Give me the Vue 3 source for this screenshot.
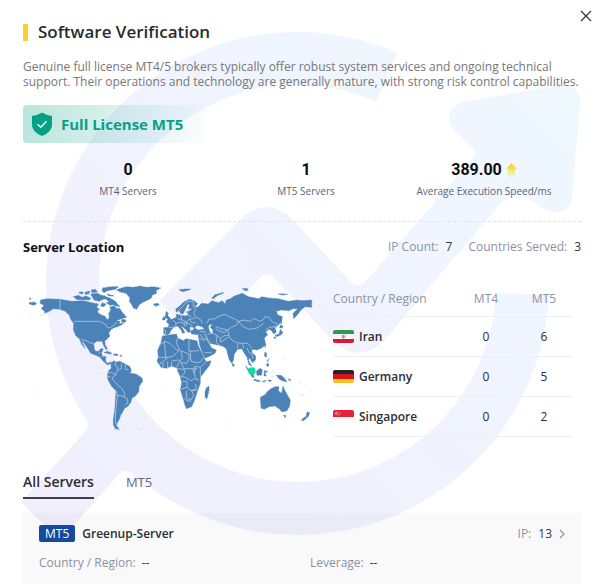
<script setup>
import { ref } from 'vue'

const stats = [
  { value: '0', label: 'MT4 Servers' },
  { value: '1', label: 'MT5 Servers' },
  { value: '389.00', label: 'Average Execution Speed/ms', up: true },
]

const countries = [
  { name: 'Iran', flag: 'ir', mt4: 0, mt5: 6 },
  { name: 'Germany', flag: 'de', mt4: 0, mt5: 5 },
  { name: 'Singapore', flag: 'sg', mt4: 0, mt5: 2 },
]

const tabs = ['All Servers', 'MT5']
const active = ref('All Servers')
</script>

<template>
  <main class="panel">
    <svg class="watermark" viewBox="0 0 600 586" aria-hidden="true">
      <defs>
        <linearGradient id="wm" gradientUnits="userSpaceOnUse" x1="90" y1="520" x2="560" y2="90">
          <stop offset="0" stop-color="#f1effd" />
          <stop offset="0.5" stop-color="#f0f3fe" />
          <stop offset="1" stop-color="#eff8fe" />
        </linearGradient>
      </defs>
      <path d="M386.7 76.9A225 225 0 1 0 522.3 294" fill="none" stroke="url(#wm)" stroke-width="53" />
      <path fill="url(#wm)" d="M21 502L85 432Q90 426 86 418L140 470L146 489L131 473Q125 468 119 474L60 541Z" />
      <path fill="url(#wm)" d="M159 301L243 217Q267 197 290 217L350 281Q358 290 367 280L474 157Q477 153 473 148L455 132Q442 115 457 104Q460 102 468 101L560 85Q580 83 580 103L572 197Q569 214 552 212Q545 211 540 206L523 195Q516 191 511 195L500 204L383 342Q358 364 334 342L273 277Q267 271 261 277L198 340Z" />
    </svg>

    <button class="close" type="button" aria-label="Close">
      <svg viewBox="0 0 12 12" width="12" height="12"><path d="M1 1L11 11M11 1L1 11" fill="none" stroke="#333" stroke-width="1.2" /></svg>
    </button>

    <h1 class="title">Software Verification</h1>
    <p class="desc">Genuine full license MT4/5 brokers typically offer robust system services and ongoing technical support. Their operations and technology are generally mature, with strong risk control capabilities.</p>

    <div class="license">
      <svg viewBox="0 0 22 24" width="22" height="24" aria-hidden="true">
        <path d="M11 0.5Q15 3 21 4V13Q21 20 11 24Q1 20 1 13V4Q7 3 11 0.5Z" fill="#06a184" />
        <path d="M6.5 12.2L9.8 15.3L15.5 9.2" fill="none" stroke="#e6fff8" stroke-width="1.5" />
      </svg>
      <span>Full License MT5</span>
    </div>

    <dl class="stats">
      <div v-for="s in stats" :key="s.label" class="stat">
        <dd>
          {{ s.value }}
          <svg v-if="s.up" viewBox="0 0 11 14" width="11" height="14" aria-hidden="true">
            <defs>
              <linearGradient id="up" x1="0" y1="0" x2="0" y2="1">
                <stop offset="0.3" stop-color="#efdc45" />
                <stop offset="1" stop-color="#f3e34d" stop-opacity="0.15" />
              </linearGradient>
            </defs>
            <path d="M5.5 0L11 6H9V14H2V6H0Z" fill="url(#up)" />
          </svg>
        </dd>
        <dt>{{ s.label }}</dt>
      </div>
    </dl>

    <section class="location">
      <header class="location-head">
        <h2>Server Location</h2>
        <p><span>IP Count:</span><b>7</b></p>
        <p><span>Countries Served:</span><b>3</b></p>
      </header>

      <div class="location-body">
        <svg class="map" viewBox="9 24 882 450" role="img" aria-label="World map">
          <g class="land">
            <path d="M62 78L80 74L120 76L155 82L190 80L215 86L235 90L230 100L238 106L232 112L238 120L255 127L262 137L268 130L266 118L272 108L270 98L282 96L292 104L298 102L308 116L320 130L300 136L288 141L300 142L298 150L312 146L306 152L292 158L280 162L272 168L266 178L270 186L262 194L254 202L256 214L262 224L258 227L250 212L246 202L230 202L222 208L222 220L226 232L236 232L242 224L250 224L244 238L248 246L258 248L256 262L264 268L272 263L272 270L262 272L250 262L240 250L228 244L212 238L204 224L192 208L183 197L190 212L195 224L186 212L178 194L168 186L160 168L161 148L152 136L148 124L136 112L120 106L100 104L88 112L74 118L74 112L64 104L72 94L60 88Z" />
            <path d="M290 48L304 42L320 38L340 40L360 36L380 40L400 38L422 42L408 50L410 58L396 64L394 72L384 78L370 84L358 92L350 106L340 102L334 90L328 82L330 72L318 58L300 54Z" />
            <path d="M272 268L282 260L288 264L300 262L316 270L330 278L334 290L330 298L348 300L366 312L368 322L358 336L356 354L346 366L336 372L332 386L322 398L314 402L308 414L302 424L298 436L292 446L290 456L298 466L286 464L280 452L280 436L284 410L286 380L288 350L276 338L264 318L262 302L266 290L274 282Z" />
            <path d="M160 68L176 64L186 70L198 66L212 72L208 78L190 77L172 77ZM212 60L232 58L244 64L256 66L262 74L250 76L238 82L222 78ZM248 42L272 38L296 38L286 46L262 50L252 56L246 50ZM214 48L226 46L232 54L216 56ZM250 68L264 70L276 76L286 82L294 92L300 98L288 96L278 92L270 94L258 86L268 84L258 76ZM196 54L210 52L208 58L196 62ZM178 54L190 54L188 60L178 58ZM262 60L282 66L266 66ZM246 86L258 90L252 98L242 96ZM400 90L414 88L418 93L406 97ZM28 72L34 74L30 77ZM28 86L44 84L50 90L40 94L28 90ZM306 136L318 138L316 145L304 144Z" />
            <path d="M252 236L262 232L276 238L270 240L258 237ZM280 240L292 240L294 245L282 244ZM300 244L305 244L305 247L300 247Z" />
            <g transform="translate(435 0)">
              <path fill-rule="evenodd" d="M32 106L44 96L56 84L74 76L90 82L98 90L88 98L98 100L110 88L130 90L140 80L160 86L172 80L180 90L184 78L196 74L208 66L232 58L250 68L282 74L290 68L312 72L340 74L370 82L398 78L410 80L440 78L440 100L420 98L408 108L396 124L386 134L384 118L398 104L384 104L372 110L350 108L334 112L338 122L352 128L350 140L340 154L330 162L334 174L326 180L320 170L312 166L302 174L308 182L298 192L302 212L290 222L276 228L262 226L260 234L272 246L272 258L262 266L254 252L250 258L260 277L252 272L246 250L238 238L230 224L218 226L208 240L205 260L200 268L192 256L187 236L184 224L172 216L154 212L134 208L122 190L116 180L104 182L80 180L76 172L88 166L82 158L74 160L76 172L70 176L60 164L52 158L46 154L56 168L60 176L52 178L50 170L38 156L30 158L20 166L12 180L2 184L-4 178L-4 161L10 160L12 150L4 144L20 136L34 130L34 120L46 124L62 126L72 120L64 114L74 110L82 104L70 104L74 92L68 90L60 108L54 120L46 118L44 110L34 114ZM88 162L96 154L112 158L118 166L100 168ZM132 152L142 150L136 160L144 168L142 180L134 174L130 160Z" />
              <path d="M-8 186L10 183L34 180L38 192L56 200L62 194L84 198L96 200L100 216L110 236L118 254L124 263L138 260L134 274L118 294L106 310L106 328L100 344L94 362L88 380L80 398L64 404L60 394L54 372L46 348L50 326L46 308L38 292L36 282L20 276L4 283L-12 280L-24 262L-20 248L-22 228L-12 206Z" />
              <path d="M100 183L116 180L124 196L134 212L140 222L154 228L150 238L136 246L120 253L112 236L104 214Z" />
              <path d="M124 342L132 336L132 350L126 374L120 370L120 354ZM4 112L10 118L8 124L18 136L20 142L4 144L8 136L0 128ZM-6 130L2 128L0 138L-8 138Z" />
              <path d="M286 370L300 362L308 352L318 344L330 338L342 338L340 350L350 358L354 336L360 350L370 368L376 378L374 396L366 410L352 414L342 404L330 396L312 398L298 406L288 402ZM356 424L364 425L360 431ZM426 414L434 416L430 428L422 432ZM420 428L424 434L412 441L409 438Z" />
              <path d="M242 276L252 286L262 298L268 310L262 310L250 292ZM268 316L286 320L282 323L266 319ZM274 292L286 282L292 288L290 304L276 304ZM298 290L308 292L300 298L304 306L297 306ZM334 304L348 304L358 312L366 324L352 320L344 316L338 310ZM300 234L305 238L304 250L298 246ZM306 268L312 270L310 278L304 274ZM312 254L306 262L308 264ZM202 268L208 272L206 278L202 275ZM346 166L354 176L346 184L334 188L330 184L342 180ZM326 190L332 188L330 195ZM346 154L354 156L352 162L344 162ZM348 130L350 130L350 150L347 150ZM300 212L303 214L300 221ZM292 322L304 319L300 323ZM310 318L320 319L314 324Z" />
              <path d="M42 47L60 45L78 45L70 49L52 53ZM140 72L150 62L176 55L174 58L156 65L146 74ZM232 44L246 43L250 50L238 49ZM340 60L352 59L368 61L352 63ZM370 314L378 318L372 320Z" />
            </g>
          </g>
          <g class="specks">
            <path d="M60 126L84 116M34 127L36 128M80 230L86 236M50 340L52 342M48 354L50 356M236 298L240 298M434 345L438 347M308 458L314 459M360 466L368 466M284 466L298 468" />
            <path transform="translate(435 0)" d="M400 320L412 332M404 360L418 364M434 346L438 352M178 450L182 452M354 250L360 252M322 290L330 296M320 308L334 304M286 324L300 326" />
          </g>
          <g class="borders">
            <path d="M120 76V106M162 142H238L250 148L258 152L262 162L272 160L284 152L290 144M184 196L204 202L212 208L218 206L222 214M236 240L240 234M244 248L252 246M288 262L286 274L294 280L292 294L286 296L288 304M304 266L304 284L296 288M316 270V286L326 288M264 298L274 294L286 304L276 312L284 324L294 334L306 344L314 358L312 368L322 374L324 386L314 394M288 350L292 366L302 364L312 370M292 366L288 400L286 440L290 456M262 306L272 310" />
            <g transform="translate(435 0)">
              <path d="M-16 212L2 202L16 210L38 230M-2 200L2 250H-22M38 192L34 206L42 224M72 198V232L102 230M42 224L38 234L22 248L2 250M42 228L72 240V256L64 268L48 266L40 258L22 260M76 232L78 262L96 266L106 264L114 250M20 276V262M34 280L44 262L52 252L48 232M48 266L56 284H84L92 276L106 280L124 262M-6 280V262L8 252M8 282V262M36 284L58 286L60 296L48 308L62 310L78 320L88 314L102 318M92 278L88 298L92 314M106 280L106 308M84 286L86 298M52 322H66L66 340L48 346M66 340L78 350L94 344L92 330M64 350V372L78 378L86 364L80 350M58 374L66 380L80 382M78 350L96 348M96 284L84 286M-10 262L-16 272" />
              <path d="M34 120L42 108L56 94L64 84L76 82L86 84M86 84L84 96L92 106L86 118L92 128L108 138L112 148M48 126L50 138L64 144L72 136L90 132M24 138L34 148L28 158M34 148L46 144L56 148L66 146L82 156M50 138L38 134M64 144V156M-4 166L2 170V184M12 160L28 160M126 148L132 136L150 134L166 124L184 122L196 130L208 134L220 142L240 138L254 142L268 134L284 142L294 138L300 128L312 130L322 144L334 148L338 158L326 160M220 142L216 152L200 160L188 168M220 142L232 156L252 166L276 162L288 154L296 148M152 158L168 164L188 168L178 176L164 172L152 164M128 180L142 178L156 184L166 192L180 184L192 184M120 178L128 196L136 206M156 184L154 206L166 216M166 192V204L180 196L190 190M188 168L192 184L196 194L214 206L232 208L236 222M232 208L248 208L262 222M218 210V224M246 222L252 236L262 240L264 254M106 182L112 192L128 198M104 172L124 174M118 236L140 236M302 168L314 160L330 158M104 194L118 200M56 148L60 158M66 122L78 128M74 136L80 146L92 146" />
            </g>
          </g>
          <circle cx="696" cy="291" r="11" fill="#08df9d" />
        </svg>

        <table class="countries">
          <thead>
            <tr><th scope="col">Country / Region</th><th scope="col" class="num">MT4</th><th scope="col" class="num">MT5</th></tr>
          </thead>
          <tbody>
            <tr v-for="c in countries" :key="c.name">
              <th scope="row">
                <span class="country">
                  <svg class="flag" viewBox="0 0 21 13" width="21" height="13" aria-hidden="true">
                    <template v-if="c.flag === 'ir'">
                      <rect width="21" height="13" fill="#f7f7f7" />
                      <rect width="21" height="4" fill="#2c9a52" />
                      <rect y="9" width="21" height="4" fill="#d01c38" />
                      <path d="M9 5.2Q8.4 7.6 10.5 8.2Q12.6 7.6 12 5.2M10.5 4.8V8.2" fill="none" stroke="#dc6574" stroke-width="0.9" />
                    </template>
                    <template v-else-if="c.flag === 'de'">
                      <rect width="21" height="5" fill="#252322" />
                      <rect y="4" width="21" height="5" fill="#d8121f" />
                      <rect y="9" width="21" height="4" fill="#f6c51d" />
                    </template>
                    <template v-else>
                      <rect width="21" height="13" fill="#fcfcfc" />
                      <rect width="21" height="7" fill="#e6213a" />
                      <path d="M4 1.5Q0.5 3.5 4 5.5Q2.5 3.5 4 1.5Z" fill="#fff" />
                      <circle cx="5.8" cy="3.5" r="1.5" fill="none" stroke="#fff" stroke-width="0.7" stroke-dasharray="0.8 0.9" />
                    </template>
                  </svg>
                  {{ c.name }}
                </span>
              </th>
              <td class="num">{{ c.mt4 }}</td>
              <td class="num">{{ c.mt5 }}</td>
            </tr>
          </tbody>
        </table>
      </div>
    </section>

    <nav class="tabs" role="tablist">
      <button v-for="t in tabs" :key="t" type="button" role="tab" class="tab" :class="{ on: active === t }" :aria-selected="active === t" @click="active = t">{{ t }}</button>
    </nav>

    <article class="server">
      <div class="server-head">
        <span class="tag">MT5</span>
        <h3>Greenup-Server</h3>
        <a class="ip" href="#ip"><span>IP:</span><b>13</b>
          <svg viewBox="0 0 6 10" width="6" height="10" aria-hidden="true"><path d="M1 1L5 5L1 9" fill="none" stroke="#8d95a3" stroke-width="1.2" /></svg>
        </a>
      </div>
      <div class="server-meta">
        <p><span>Country / Region:</span><b>--</b></p>
        <p><span>Leverage:</span><b>--</b></p>
      </div>
    </article>
  </main>
</template>

<style>
body { background: #fff; }
</style>

<style scoped>
* { box-sizing: border-box; margin: 0; padding: 0; }
.panel {
  position: relative;
  isolation: isolate;
  padding: 20px 19px 4px 23px;
  font-family: "Open Sans", "Noto Sans", sans-serif;
  font-size: 12px;
  color: #2b2d33;
}
.watermark { position: absolute; inset: 0 0 auto 0; width: 100%; z-index: -1; }
button { border: 0; background: none; font: inherit; cursor: pointer; }
.close { position: absolute; top: 10px; right: 8px; width: 12px; height: 12px; }
.close svg { display: block; }

.title {
  display: flex;
  align-items: center;
  gap: 10px;
  font-size: 17px;
  font-weight: 600;
  line-height: 24px;
  color: #292b2f;
}
.title::before { content: ""; width: 5px; height: 17px; background: #fdd12c; }
.desc { margin-top: 15px; line-height: 15px; color: #777; }

.license {
  display: flex;
  align-items: center;
  gap: 8px;
  width: 181px;
  height: 38px;
  margin-top: 16px;
  padding-left: 8px;
  border-radius: 4px;
  background: linear-gradient(90deg, rgba(6, 161, 132, 0.28), rgba(6, 161, 132, 0.02));
  color: #06a184;
  font-size: 15px;
  font-weight: 700;
  white-space: nowrap;
}

.stats {
  display: grid;
  grid-template-columns: repeat(3, 1fr);
  padding: 16px 8px 23px 16px;
  border-bottom: 1px dashed #dfe2e8;
  text-align: center;
}
.stat { display: flex; flex-direction: column; }
.stat dd {
  display: flex;
  align-items: center;
  justify-content: center;
  gap: 4px;
  font: 700 16px/22px Roboto, sans-serif;
  color: #0c0e12;
}
.stat dt { margin-top: 3px; font-size: 10px; line-height: 14px; color: #596379; }

.location-head { display: flex; align-items: center; gap: 16px; margin-top: 15px; line-height: 20px; }
.location-head h2 { margin-right: auto; font-size: 13px; font-weight: 700; color: #0c0e12; }
p b, .ip b { font-weight: 400; color: #33363d; }
.location-head p { display: flex; gap: 7px; color: #8a93a3; }
.location-body { display: flex; align-items: flex-start; gap: 16px; margin-top: 25px; }
.map { flex: 0 1 294px; min-width: 0; }
.land { fill: #4b82b7; stroke: #4b82b7; stroke-width: 2; stroke-dasharray: 4 3; }
.specks { fill: none; stroke: #9dbbd9; stroke-width: 2; stroke-dasharray: 3 3; }
.borders { fill: none; stroke: #c7d9ec; stroke-width: 2; stroke-linejoin: round; }

.countries { flex: 1; margin-right: 8px; border-collapse: collapse; table-layout: fixed; color: #2b2d33; }
.countries th, .countries td { height: 40px; border-bottom: 1px solid #eff0f3; text-align: left; vertical-align: middle; }
.countries thead th { height: 34px; font-weight: 400; color: #8a93a3; }
.countries th.num, .countries td.num { width: 58px; text-align: center; }
.countries th:first-child { width: auto; }
.countries tbody th { font-weight: 600; }
.country { display: flex; align-items: center; gap: 5px; }
.flag { border-radius: 2px; }

.tabs { display: flex; gap: 32px; margin-top: 34px; }
.tab { height: 28px; padding-bottom: 4px; border-bottom: 2px solid transparent; line-height: 20px; font-size: 13px; color: #626a7e; }
.tab.on { border-color: #42404e; font-size: 14px; font-weight: 600; color: #2b2d33; }

.server { margin-top: 14px; padding: 12px 16px; background: rgba(0, 0, 0, 0.025); }
.server-head { display: flex; align-items: center; gap: 7px; line-height: 18px; }
.tag { padding: 0 6px; border-radius: 2px; background: #164a9c; color: #fff; line-height: 17px; }
.server h3 { font-size: 12px; font-weight: 600; }
.ip { display: flex; align-items: center; gap: 7px; margin-left: auto; color: #8a93a3; text-decoration: none; }
.server-meta { display: grid; grid-template-columns: 1fr 1fr; gap: 16px; margin-top: 11px; line-height: 18px; color: #8a93a3; }
.server-meta p { display: flex; gap: 6px; }
</style>
